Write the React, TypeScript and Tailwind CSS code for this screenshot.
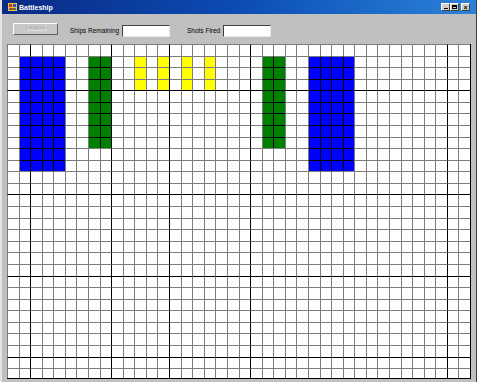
import React from "react";

const COLS = 40;
const ROWS = 29;
const thickCols = [2, 9, 14, 21, 38];
const thickRows = [4, 13, 20, 27];

// ships: [colStart, colEnd, rowStart, rowEnd, color, dark inner lines]
const ships: [number, number, number, number, string, boolean][] = [
  [1, 4, 1, 10, "bg-[#0000ff]", true],
  [7, 8, 1, 8, "bg-[#008000]", true],
  [11, 11, 1, 3, "bg-[#ffff00]", false],
  [13, 13, 1, 3, "bg-[#ffff00]", false],
  [15, 15, 1, 3, "bg-[#ffff00]", false],
  [17, 17, 1, 3, "bg-[#ffff00]", false],
  [22, 23, 1, 8, "bg-[#008000]", true],
  [26, 29, 1, 10, "bg-[#0000ff]", true],
];

function shipAt(r: number, c: number) {
  for (const s of ships) {
    if (c >= s[0] && c <= s[1] && r >= s[2] && r <= s[3]) return s;
  }
  return null;
}

function TitleBar() {
  return (
    <div className="flex items-center h-[14px] bg-linear-to-r from-[#0a2a86] via-[#0c4cb4] to-[#2c82d8] pl-[6px] pr-[6px]">
      <svg width="9" height="8" viewBox="0 0 9 8" className="mr-[2px]">
        <rect x="0" y="0" width="9" height="8" fill="#f0c040" />
        <rect x="1" y="1" width="3" height="3" fill="#d03010" />
        <rect x="5" y="1" width="3" height="3" fill="#3050c0" />
        <rect x="1" y="5" width="7" height="2" fill="#806040" />
      </svg>
      <span className="text-white font-bold text-[7px] leading-none font-['Liberation_Sans',sans-serif]">
        Battleship
      </span>
      <div className="ml-auto flex items-center">
        <div className="w-[9px] h-[8px] bg-[#d4d0c8] border border-t-white border-l-white border-r-[#404040] border-b-[#404040] flex items-end justify-center pb-[1px]">
          <div className="w-[4px] h-[1px] bg-black" />
        </div>
        <div className="w-[9px] h-[8px] bg-[#d4d0c8] border border-t-white border-l-white border-r-[#404040] border-b-[#404040] flex items-center justify-center">
          <div className="w-[5px] h-[4px] border border-black border-t-2" />
        </div>
        <div className="ml-[2px] w-[9px] h-[8px] bg-[#d4d0c8] border border-t-white border-l-white border-r-[#404040] border-b-[#404040] flex items-center justify-center text-[7px] leading-none font-bold text-black font-['Liberation_Sans',sans-serif]">
          ×
        </div>
      </div>
    </div>
  );
}

function Toolbar() {
  return (
    <div className="flex items-end h-[30px] pb-[7px] pl-[11px] font-['Liberation_Sans',sans-serif] text-[6.5px] text-black">
      <button
        disabled
        className="w-[45px] h-[12px] bg-[#c8c8c8] border border-t-white border-l-white border-r-[#606060] border-b-[#606060] text-[#a0a0a0] text-[5.5px] leading-none [text-shadow:1px_1px_0_#fff] mb-[2px]"
      >
        Initialize
      </button>
      <span className="ml-[12px] w-[46px] whitespace-nowrap mb-[3px] leading-none">Ships Remaining</span>
      <div className="ml-[6px] w-[48px] h-[12px] bg-white border border-t-[#404040] border-l-[#404040] border-r-[#e8e8e8] border-b-[#e8e8e8]" />
      <span className="ml-[17px] w-[30px] whitespace-nowrap mb-[3px] leading-none">Shots Fired</span>
      <div className="ml-[6px] w-[48px] h-[12px] bg-white border border-t-[#404040] border-l-[#404040] border-r-[#e8e8e8] border-b-[#e8e8e8]" />
    </div>
  );
}

function Board() {
  const cells = [];
  for (let r = 0; r < ROWS; r++) {
    for (let c = 0; c < COLS; c++) {
      const ship = shipAt(r, c);
      const dark = ship && ship[5];
      const lc = thickCols.includes(c) || (dark && c !== ship![0]) ? "border-l-black" : "border-l-[#7c7c7c]";
      const tc = thickRows.includes(r) || (dark && r !== ship![2]) ? "border-t-black" : "border-t-[#7c7c7c]";
      cells.push(
        <div key={r * COLS + c} className={`border-l border-t ${lc} ${tc} ${ship ? ship[4] : "bg-white"}`} />
      );
    }
  }
  return (
    <div className="ml-[5px] w-[464px] h-[335px] overflow-hidden border-r border-b border-black">
      <div className="grid grid-cols-[12px_11px_12px_11px_12px_11px_12px_12px_11px_12px_11px_12px_11px_12px_12px_11px_12px_11px_12px_12px_11px_12px_11px_12px_11px_12px_12px_11px_12px_11px_12px_11px_12px_12px_11px_12px_11px_12px_11px_12px] grid-rows-[12px_11px_12px_11px_12px_11px_12px_12px_11px_12px_11px_12px_11px_12px_12px_11px_12px_11px_12px_12px_11px_12px_11px_12px_11px_12px_12px_11px_12px]">
        {cells}
      </div>
    </div>
  );
}

export default function App() {
  return (
    <div className="w-[477px] h-[382px] bg-[#c0c0c0] overflow-hidden border-r border-[#404040] border-l-2 border-l-[#e4e4e4]">
      <TitleBar />
      <Toolbar />
      <Board />
    </div>
  );
}
